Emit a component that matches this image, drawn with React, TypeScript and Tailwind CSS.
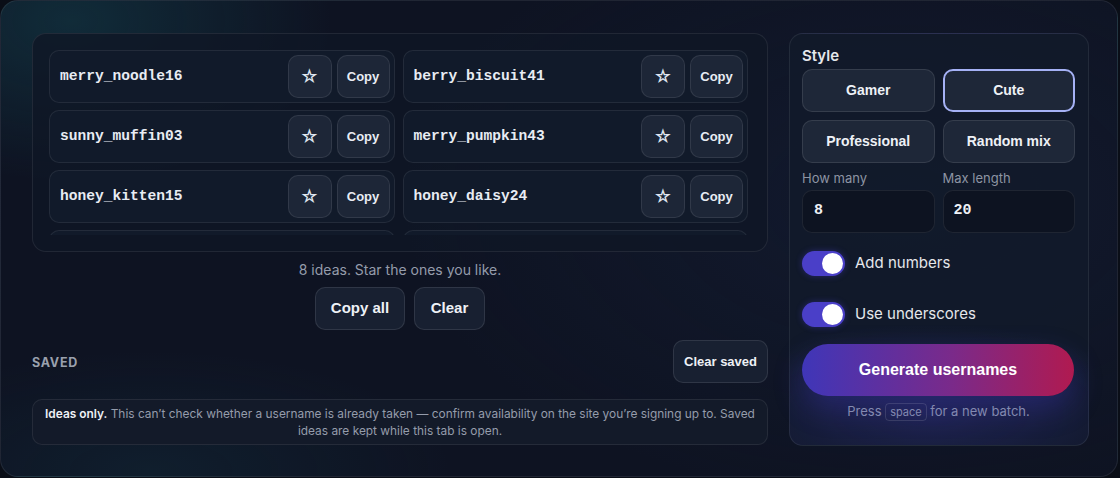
import React from "react";

const names = [
  "merry_noodle16",
  "berry_biscuit41",
  "sunny_muffin03",
  "merry_pumpkin43",
  "honey_kitten15",
  "honey_daisy24",
];

const btnFont = { fontFamily: '"Liberation Sans", Arial, sans-serif' } as const;

function Row({ name }: { name: string }) {
  return (
    <div className="flex h-[53px] items-center rounded-[10px] border border-white/[0.08] bg-[#111a2a] pl-[10px] pr-[4px]">
      <span className="flex-1 font-['Liberation_Mono',monospace] text-[14.6px] font-bold text-[#e8ecf3]">
        {name}
      </span>
      <button className="flex h-[43px] w-[44px] items-center justify-center rounded-[10px] border border-white/[0.09] bg-[#1d2637] text-[18px] text-[#dfe5f0]">
        ☆
      </button>
      <button
        style={btnFont}
        className="ml-[5px] flex h-[43px] w-[53px] items-center justify-center rounded-[10px] border border-white/[0.09] bg-[#1d2637] text-[13px] font-bold text-[#e8ecf3]"
      >
        Copy
      </button>
    </div>
  );
}

function Toggle({ label }: { label: string }) {
  return (
    <div className="flex items-center gap-[10px]">
      <div className="flex h-[25px] w-[43px] items-center justify-end rounded-full bg-[#4a3fc8] pr-[2px] shadow-[0_0_6px_rgba(79,70,229,0.35)]">
        <div className="h-[21px] w-[21px] rounded-full bg-white" />
      </div>
      <span className="text-[15px] text-[#e5e7eb]">{label}</span>
    </div>
  );
}

export default function App() {
  return (
    <div className="h-[478px] w-[1120px] overflow-hidden bg-[#0a0e17] font-['Inter',sans-serif]">
      <div className="flex h-[477px] w-[1118px] gap-[21px] rounded-[18px] border border-white/[0.08] bg-[#0e1322] bg-[radial-gradient(ellipse_260px_160px_at_70px_20px,rgba(22,95,105,0.32),transparent),radial-gradient(ellipse_300px_120px_at_150px_470px,rgba(22,80,95,0.18),transparent),radial-gradient(ellipse_500px_300px_at_900px_200px,rgba(30,45,80,0.25),transparent)] pb-[30px] pl-[31px] pr-[28px] pt-[32px]">
        {/* Left column */}
        <div className="flex w-[736px] flex-col">
          <div className="h-[219px] rounded-[14px] border border-white/[0.08] bg-[#0f1626]/80 py-[16px] pl-[16px] pr-[19px]">
            <div className="grid h-[185px] grid-cols-2 content-start gap-x-[8px] gap-y-[7px] overflow-hidden">
              {names.map((n) => (
                <Row key={n} name={n} />
              ))}
              <div className="h-[53px] rounded-[10px] border border-white/[0.08] bg-[#111a2a]" />
              <div className="h-[53px] rounded-[10px] border border-white/[0.08] bg-[#111a2a]" />
            </div>
          </div>
          <p className="mt-[8px] text-center text-[14px] leading-[20px] text-[#959cab]">
            8 ideas. Star the ones you like.
          </p>
          <div className="mt-[7px] flex justify-center gap-[9px]" style={btnFont}>
            <button className="h-[43px] w-[90px] rounded-[10px] border border-white/[0.1] bg-[#182031] text-[15px] font-bold text-[#eef1f6]">
              Copy all
            </button>
            <button className="h-[43px] w-[71px] rounded-[10px] border border-white/[0.1] bg-[#182031] text-[15px] font-bold text-[#eef1f6]">
              Clear
            </button>
          </div>
          <div className="mt-[10px] flex h-[43px] items-center justify-between">
            <span className="pt-[3px] text-[12.5px] font-bold tracking-[0.06em] text-[#9aa1ae]">SAVED</span>
            <button
              style={btnFont}
              className="h-[43px] w-[95px] rounded-[10px] border border-white/[0.1] bg-[#182031] text-[13px] font-bold text-[#eef1f6]"
            >
              Clear saved
            </button>
          </div>
          <div className="mt-[16px] flex h-[46px] items-center justify-center rounded-[10px] border border-white/[0.08] bg-[#131a29] px-[3px] text-center text-[11.9px] leading-[17px] text-[#959cab]">
            <p>
              <b className="font-semibold text-[#eef1f6]">Ideas only.</b> This can’t check whether a username is
              already taken — confirm availability on the site you’re signing up to. Saved ideas are kept while this
              tab is open.
            </p>
          </div>
        </div>

        {/* Right column */}
        <div className="flex w-[300px] flex-col rounded-[14px] border border-white/[0.08] bg-[#121a2b]/80 bg-[radial-gradient(ellipse_220px_90px_at_140px_380px,rgba(60,55,170,0.3),transparent)] pl-[12px] pr-[13px] pt-[12px]">
          <div className="text-[15px] font-semibold leading-[20px] text-[#e5e7eb]">Style</div>
          <div className="mt-[3px] grid grid-cols-2 gap-[8px]" style={btnFont}>
            <button className="h-[43px] rounded-[10px] border border-white/[0.1] bg-[#1e2738] text-[14px] font-bold text-[#eef1f6]">
              Gamer
            </button>
            <button className="h-[43px] rounded-[10px] border-2 border-[#a5b1f5] bg-[#1e2738] text-[14px] font-bold text-[#eef1f6]">
              Cute
            </button>
            <button className="h-[43px] rounded-[10px] border border-white/[0.1] bg-[#1e2738] text-[14px] font-bold text-[#eef1f6]">
              Professional
            </button>
            <button className="h-[43px] rounded-[10px] border border-white/[0.1] bg-[#1e2738] text-[14px] font-bold text-[#eef1f6]">
              Random mix
            </button>
          </div>
          <div className="mt-[7px] grid grid-cols-2 gap-x-[8px]">
            <div>
              <div className="text-[13px] leading-[16px] text-[#8d94a3]">How many</div>
              <div className="mt-[4px] flex h-[43px] items-center rounded-[10px] border border-white/[0.08] bg-[#0d1321] px-[11px] font-['Liberation_Mono',monospace] text-[15px] font-bold text-[#eef1f6]">
                8
              </div>
            </div>
            <div>
              <div className="text-[13px] leading-[16px] text-[#8d94a3]">Max length</div>
              <div className="mt-[4px] flex h-[43px] items-center rounded-[10px] border border-white/[0.08] bg-[#0d1321] px-[10px] font-['Liberation_Mono',monospace] text-[15px] font-bold text-[#eef1f6]">
                20
              </div>
            </div>
          </div>
          <div className="mt-[18px] flex flex-col gap-[26px]">
            <Toggle label="Add numbers" />
            <Toggle label="Use underscores" />
          </div>
          <button
            style={btnFont}
            className="mt-[17px] h-[52px] w-[272px] rounded-full bg-[linear-gradient(90deg,#3f36b8,#7a2a8a_55%,#b01a50)] text-[16px] font-bold text-white shadow-[0_12px_30px_rgba(70,60,210,0.3)]"
          >
            Generate usernames
          </button>
          <p className="mt-[6px] text-center text-[13px] leading-[18px] text-[#8389b0]">
            Press{" "}
            <kbd className="rounded-[4px] border border-white/[0.12] px-[4px] py-[1px] font-['Inter',sans-serif] text-[11px] text-[#8389b0]">
              space
            </kbd>{" "}
            for a new batch.
          </p>
        </div>
      </div>
    </div>
  );
}
